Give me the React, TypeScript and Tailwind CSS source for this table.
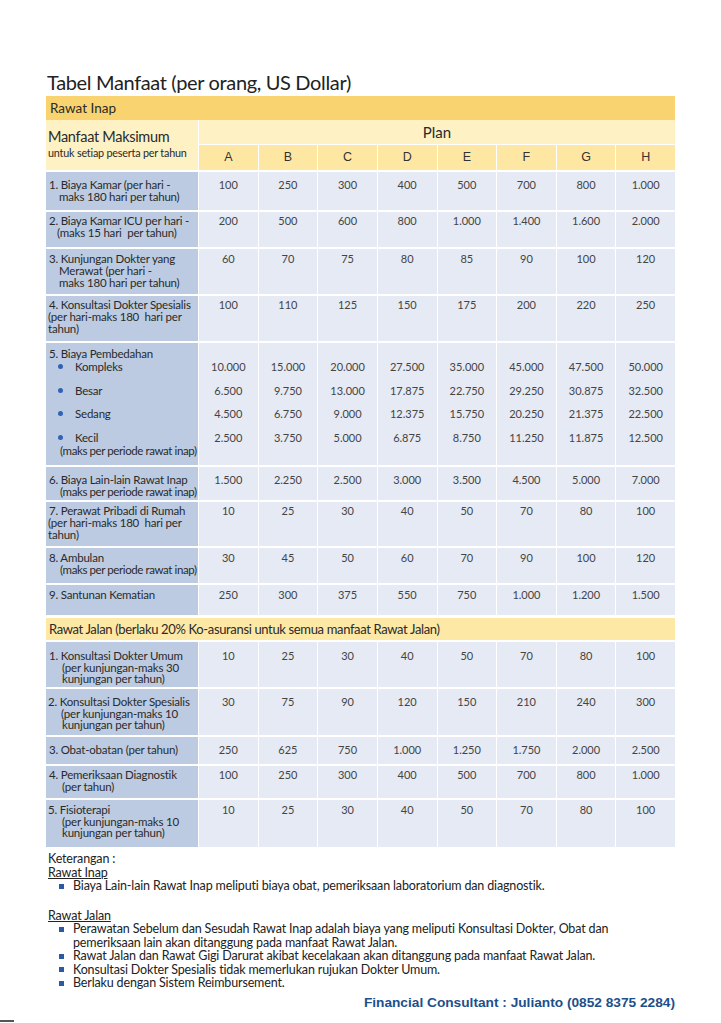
import React from "react";

type Line = [string, number];
type Row = { h: string; pt: string; lead: string; lines: Line[]; vals: string[] };

const indentCls: Record<number, string> = {
  2: "pl-[2px]",
  3: "pl-[3px]",
  11: "pl-[11px]",
  13: "pl-[13px]",
  14: "pl-[14px] tracking-[-0.4px]",
  15: "pl-[15px]",
  16: "pl-[16px]",
};

const inap: Row[] = [
  { h: "h-[38px]", pt: "pt-[7px]", lead: "leading-[12px]", lines: [["1. Biaya Kamar (per hari -", 3], ["maks 180 hari per tahun)", 13]], vals: ["100", "250", "300", "400", "500", "700", "800", "1.000"] },
  { h: "h-[35px]", pt: "pt-[3px]", lead: "leading-[12px]", lines: [["2. Biaya Kamar ICU per hari -", 3], ["(maks 15 hari  per tahun)", 11]], vals: ["200", "500", "600", "800", "1.000", "1.400", "1.600", "2.000"] },
  { h: "h-[45px]", pt: "pt-[4px]", lead: "leading-[12px]", lines: [["3. Kunjungan Dokter yang", 3], ["Merawat (per hari -", 13], ["maks 180 hari per tahun)", 13]], vals: ["60", "70", "75", "80", "85", "90", "100", "120"] },
  { h: "h-[45px]", pt: "pt-[3px]", lead: "leading-[12px]", lines: [["4. Konsultasi Dokter Spesialis", 3], ["(per hari-maks 180  hari per", 2], ["tahun)", 2]], vals: ["100", "110", "125", "150", "175", "200", "220", "250"] },
];

const inap2: Row[] = [
  { h: "h-[33px]", pt: "pt-[7px]", lead: "leading-[12px]", lines: [["6. Biaya Lain-lain Rawat Inap", 3], ["(maks per periode rawat inap)", 14]], vals: ["1.500", "2.250", "2.500", "3.000", "3.500", "4.500", "5.000", "7.000"] },
  { h: "h-[44px]", pt: "pt-[3px]", lead: "leading-[12px]", lines: [["7. Perawat Pribadi di Rumah", 3], ["(per hari-maks 180  hari per", 2], ["tahun)", 2]], vals: ["10", "25", "30", "40", "50", "70", "80", "100"] },
  { h: "h-[35px]", pt: "pt-[4px]", lead: "leading-[12px]", lines: [["8. Ambulan", 3], ["(maks per periode rawat inap)", 14]], vals: ["30", "45", "50", "60", "70", "90", "100", "120"] },
  { h: "h-[30px]", pt: "pt-[4px]", lead: "leading-[12px]", lines: [["9. Santunan Kematian", 3]], vals: ["250", "300", "375", "550", "750", "1.000", "1.200", "1.500"] },
];

const jalan: Row[] = [
  { h: "h-[45px]", pt: "pt-[8px]", lead: "leading-[11.5px]", lines: [["1. Konsultasi Dokter Umum", 3], ["(per kunjungan-maks 30", 16], ["kunjungan per tahun)", 16]], vals: ["10", "25", "30", "40", "50", "70", "80", "100"] },
  { h: "h-[46px]", pt: "pt-[7px]", lead: "leading-[11.5px]", lines: [["2. Konsultasi Dokter Spesialis", 2], ["(per kunjungan-maks 10", 15], ["kunjungan per tahun)", 16]], vals: ["30", "75", "90", "120", "150", "210", "240", "300"] },
  { h: "h-[27px]", pt: "pt-[7px]", lead: "leading-[11.5px]", lines: [["3. Obat-obatan (per tahun)", 3]], vals: ["250", "625", "750", "1.000", "1.250", "1.750", "2.000", "2.500"] },
  { h: "h-[32px]", pt: "pt-[3px]", lead: "leading-[11.5px]", lines: [["4. Pemeriksaan Diagnostik", 3], ["(per tahun)", 16]], vals: ["100", "250", "300", "400", "500", "700", "800", "1.000"] },
  { h: "h-[47px]", pt: "pt-[4px]", lead: "leading-[11.5px]", lines: [["5. Fisioterapi", 2], ["(per kunjungan-maks 10", 16], ["kunjungan per tahun)", 16]], vals: ["10", "25", "30", "40", "50", "70", "80", "100"] },
];

const surgery = {
  labels: ["Kompleks", "Besar", "Sedang", "Kecil"],
  vals: [
    ["10.000", "6.500", "4.500", "2.500"],
    ["15.000", "9.750", "6.750", "3.750"],
    ["20.000", "13.000", "9.000", "5.000"],
    ["27.500", "17.875", "12.375", "6.875"],
    ["35.000", "22.750", "15.750", "8.750"],
    ["45.000", "29.250", "20.250", "11.250"],
    ["47.500", "30.875", "21.375", "11.875"],
    ["50.000", "32.500", "22.500", "12.500"],
  ],
};

const subMt = ["", "mt-[11px]", "mt-[10px]", "mt-[11px]"];

const LEFT = "w-[152px] shrink-0 bg-[#bccbe1] text-[11.5px] text-[#2a2a2a] tracking-[-0.2px] whitespace-pre overflow-hidden";
const CELL = "flex-1 bg-[#e5eaf4] text-center text-[11px] text-[#444]";

function TableRow({ r }: { r: Row }) {
  return (
    <div className={`flex gap-px mt-[2px] ${r.h}`}>
      <div className={`${LEFT} ${r.pt} ${r.lead}`}>
        {r.lines.map(([t, x], i) => (
          <div key={i} className={indentCls[x]}>
            {t}
          </div>
        ))}
      </div>
      {r.vals.map((v, i) => (
        <div key={i} className={`${CELL} ${r.pt} ${r.lead}`}>
          {v}
        </div>
      ))}
    </div>
  );
}

function SurgeryRow() {
  return (
    <div className="flex gap-px mt-[2px] h-[122px]">
      <div className={`${LEFT} pt-[4px] leading-[13px]`}>
        <div className="pl-[3px]">5. Biaya Pembedahan</div>
        {surgery.labels.map((l, i) => (
          <div key={l} className={`flex items-center ${subMt[i]}`}>
            <span className="ml-[12px] w-[5px] h-[5px] rounded-full bg-[#2e64b4]" />
            <span className="ml-[12px]">{l}</span>
          </div>
        ))}
        <div className="pl-[14px] tracking-[-0.4px]">(maks per periode rawat inap)</div>
      </div>
      {surgery.vals.map((col, ci) => (
        <div key={ci} className={`${CELL} pt-[17px] leading-[13px]`}>
          {col.map((v, i) => (
            <div key={i} className={subMt[i]}>
              {v}
            </div>
          ))}
        </div>
      ))}
    </div>
  );
}

function Bullet({ children }: { children: React.ReactNode }) {
  return (
    <div className="flex">
      <span className="mt-[4.5px] ml-[11px] w-[5px] h-[5px] shrink-0 bg-[#2c5aa0]" />
      <span className="ml-[9px]">{children}</span>
    </div>
  );
}

export default function App() {
  return (
    <div className="w-[721px] h-[1023px] bg-white flex flex-col font-['Lato',sans-serif] text-[#333]">
      <div className="pl-[46px] pt-[69px] w-[675px]">
        <div className="h-[27px] leading-[27px] text-[20px] text-[#222] tracking-[-0.35px] pl-[1px]">
          Tabel Manfaat (per orang, US Dollar)
        </div>
        <div className="h-[24px] leading-[24px] bg-[#f9d36f] text-[13.5px] text-[#2a2a2a] pl-[4px]">Rawat Inap</div>
        <div className="flex gap-px">
          <div className="w-[152px] shrink-0 h-[50px] bg-[#fef1c4] pt-[9px] pl-[2px]">
            <div className="text-[14.5px] leading-[16px] text-[#2a2a2a] tracking-[-0.3px]">Manfaat Maksimum</div>
            <div className="text-[10.8px] leading-[11px] mt-[2px] text-[#2a2a2a] tracking-[-0.2px]">
              untuk setiap peserta per tahun
            </div>
          </div>
          <div className="flex-1 flex flex-col gap-px">
            <div className="h-[24px] leading-[24px] bg-[#fef1c4] text-center text-[15px] text-[#2a2a2a]">Plan</div>
            <div className="flex gap-px h-[25px]">
              {["A", "B", "C", "D", "E", "F", "G", "H"].map((p) => (
                <div
                  key={p}
                  className="flex-1 bg-[#fee7a3] text-center leading-[25px] text-[12.5px] text-[#333] font-['Liberation_Sans',sans-serif]"
                >
                  {p}
                </div>
              ))}
            </div>
          </div>
        </div>
        {inap.map((r, i) => (
          <TableRow key={i} r={r} />
        ))}
        <SurgeryRow />
        {inap2.map((r, i) => (
          <TableRow key={i} r={r} />
        ))}
        <div className="mt-[3px] h-[22px] leading-[22px] bg-[#fee8a6] text-[13px] text-[#2a2a2a] pl-[3px] tracking-[-0.35px]">
          Rawat Jalan (berlaku 20% Ko-asuransi untuk semua manfaat Rawat Jalan)
        </div>
        {jalan.map((r, i) => (
          <TableRow key={i} r={r} />
        ))}
        <div className="mt-[5px] text-[12.5px] leading-[13.5px] text-[#222] tracking-[-0.15px] pl-[2px]">
          <div>Keterangan :</div>
          <div className="underline decoration-1 underline-offset-[1px]">Rawat Inap</div>
          <Bullet>Biaya Lain-lain Rawat Inap meliputi biaya obat, pemeriksaan laboratorium dan diagnostik.</Bullet>
          <div className="mt-[16px] underline decoration-1 underline-offset-[1px]">Rawat Jalan</div>
          <Bullet>
            Perawatan Sebelum dan Sesudah Rawat Inap adalah biaya yang meliputi Konsultasi Dokter, Obat dan
            <br />
            pemeriksaan lain akan ditanggung pada manfaat Rawat Jalan.
          </Bullet>
          <Bullet>Rawat Jalan dan Rawat Gigi Darurat akibat kecelakaan akan ditanggung pada manfaat Rawat Jalan.</Bullet>
          <Bullet>Konsultasi Dokter Spesialis tidak memerlukan rujukan Dokter Umum.</Bullet>
          <Bullet>Berlaku dengan Sistem Reimbursement.</Bullet>
        </div>
        <div className="mt-[5px] text-right text-[13.7px] leading-[16px] font-bold text-[#1d4f8c] font-['Liberation_Sans',sans-serif]">
          Financial Consultant : Julianto (0852 8375 2284)
        </div>
      </div>
      <div className="mt-auto mb-[1px] w-[14px] h-[2px] bg-[#555]" />
    </div>
  );
}
